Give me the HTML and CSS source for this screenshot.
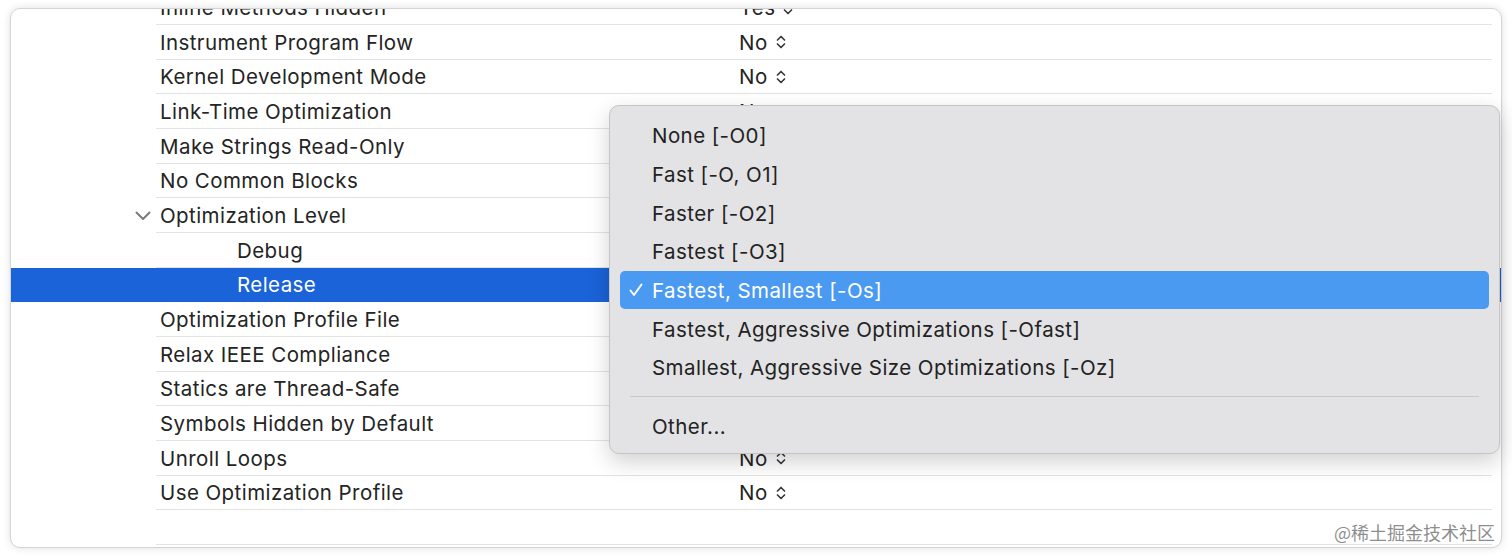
FILE: index.html
```html
<!DOCTYPE html>
<html>
<head>
<meta charset="utf-8">
<link rel="stylesheet" href="styles.css">
</head>
<body>
<div class="window">
  <div class="list">
    <div class="row"><div class="disc"></div><div class="cell"><span class="label">Inline Methods Hidden</span><span class="value">Yes <svg class="step" viewBox="0 0 10 16"><path d="M1.5 6 L5 2.5 L8.5 6 M1.5 10 L5 13.5 L8.5 10"/></svg></span></div></div>
    <div class="row"><div class="disc"></div><div class="cell"><span class="label">Instrument Program Flow</span><span class="value">No <svg class="step" viewBox="0 0 10 16"><path d="M1.5 6 L5 2.5 L8.5 6 M1.5 10 L5 13.5 L8.5 10"/></svg></span></div></div>
    <div class="row"><div class="disc"></div><div class="cell"><span class="label">Kernel Development Mode</span><span class="value">No <svg class="step" viewBox="0 0 10 16"><path d="M1.5 6 L5 2.5 L8.5 6 M1.5 10 L5 13.5 L8.5 10"/></svg></span></div></div>
    <div class="row"><div class="disc"></div><div class="cell"><span class="label">Link-Time Optimization</span><span class="value">No <svg class="step" viewBox="0 0 10 16"><path d="M1.5 6 L5 2.5 L8.5 6 M1.5 10 L5 13.5 L8.5 10"/></svg></span></div></div>
    <div class="row"><div class="disc"></div><div class="cell"><span class="label">Make Strings Read-Only</span><span class="value">Yes <svg class="step" viewBox="0 0 10 16"><path d="M1.5 6 L5 2.5 L8.5 6 M1.5 10 L5 13.5 L8.5 10"/></svg></span></div></div>
    <div class="row"><div class="disc"></div><div class="cell"><span class="label">No Common Blocks</span><span class="value">Yes <svg class="step" viewBox="0 0 10 16"><path d="M1.5 6 L5 2.5 L8.5 6 M1.5 10 L5 13.5 L8.5 10"/></svg></span></div></div>
    <div class="row"><div class="disc"><svg class="chev" viewBox="0 0 16 10"><path d="M1.5 1.5 L8 8 L14.5 1.5"/></svg></div><div class="cell"><span class="label">Optimization Level</span><span class="value">&lt;Multiple values&gt;</span></div></div>
    <div class="row"><div class="disc"></div><div class="cell"><span class="label child">Debug</span><span class="value">None [-O0]</span></div></div>
    <div class="row selected"><div class="disc"></div><div class="cell"><span class="label child">Release</span><span class="value">Fastest, Smallest [-Os]</span></div></div>
    <div class="row"><div class="disc"></div><div class="cell"><span class="label">Optimization Profile File</span><span class="value"></span></div></div>
    <div class="row"><div class="disc"></div><div class="cell"><span class="label">Relax IEEE Compliance</span><span class="value">Yes</span></div></div>
    <div class="row"><div class="disc"></div><div class="cell"><span class="label">Statics are Thread-Safe</span><span class="value">Yes</span></div></div>
    <div class="row"><div class="disc"></div><div class="cell"><span class="label">Symbols Hidden by Default</span><span class="value">No</span></div></div>
    <div class="row"><div class="disc"></div><div class="cell"><span class="label">Unroll Loops</span><span class="value">No <svg class="step" viewBox="0 0 10 16"><path d="M1.5 6 L5 2.5 L8.5 6 M1.5 10 L5 13.5 L8.5 10"/></svg></span></div></div>
    <div class="row"><div class="disc"></div><div class="cell"><span class="label">Use Optimization Profile</span><span class="value">No <svg class="step" viewBox="0 0 10 16"><path d="M1.5 6 L5 2.5 L8.5 6 M1.5 10 L5 13.5 L8.5 10"/></svg></span></div></div>
    <div class="row"><div class="disc"></div><div class="cell"><span class="label"></span></div></div>
  </div>
</div>

<div class="menu">
  <div class="item">None [-O0]</div>
  <div class="item">Fast [-O, O1]</div>
  <div class="item">Faster [-O2]</div>
  <div class="item">Fastest [-O3]</div>
  <div class="item active"><svg class="check" viewBox="0 0 14 14"><path d="M1.5 7.5 L5 12 L12.5 1.5"/></svg>Fastest, Smallest [-Os]</div>
  <div class="item">Fastest, Aggressive Optimizations [-Ofast]</div>
  <div class="item">Smallest, Aggressive Size Optimizations [-Oz]</div>
  <div class="sep"></div>
  <div class="item">Other...</div>
</div>

<div class="watermark">@稀土掘金技术社区</div>
</body>
</html>
```

FILE: styles.css
```css
html, body {
  margin: 0;
  padding: 0;
  background: #ffffff;
}
body {
  position: relative;
  width: 1512px;
  height: 559px;
  overflow: hidden;
  font-family: Inter, "Noto Sans", sans-serif;
  font-size: 20.5px;
  letter-spacing: 0.43px;
  color: #242424;
}
.window {
  margin: 8px 0 0 10px;
  width: 1492px;
  height: 540px;
  box-sizing: border-box;
  border: 1px solid #d4d4d4;
  border-radius: 10px;
  overflow: hidden;
  background: #fff;
  box-shadow: 0 0 8px rgba(0, 0, 0, 0.12);
}
.list {
  margin-top: -18.67px;
}
.row {
  display: flex;
  height: 34.67px;
  padding-left: 124px;
  padding-right: 9px;
}
.disc {
  width: 21px;
  display: flex;
  align-items: center;
}
.chev {
  width: 16px;
  height: 10px;
  fill: none;
  stroke: #7a7a7a;
  stroke-width: 2;
  stroke-linecap: round;
  stroke-linejoin: round;
}
.cell {
  flex: 1;
  display: flex;
  align-items: center;
  box-sizing: border-box;
  border-bottom: 1px solid #e3e3e3;
  padding-top: 1px;
}
.label {
  width: 583px;
  padding-left: 4px;
  box-sizing: border-box;
  white-space: nowrap;
}
.label.child {
  padding-left: 81px;
}
.value {
  display: flex;
  align-items: center;
  gap: 8px;
  white-space: nowrap;
}
.step {
  width: 10px;
  height: 16px;
  fill: none;
  stroke: #3a3a3a;
  stroke-width: 1.7;
  stroke-linecap: round;
  stroke-linejoin: round;
}
.row.selected {
  background: #1b63d8;
  color: #fff;
}
.row.selected .cell {
  border-bottom-color: transparent;
}
.menu {
  position: absolute;
  left: 609px;
  top: 105px;
  width: 891px;
  height: 349px;
  box-sizing: border-box;
  padding: 10px 10px 8px 10px;
  background: #e3e3e5;
  border: 1px solid #c4c4c6;
  border-radius: 10px;
  box-shadow: 0 8px 22px rgba(0, 0, 0, 0.18);
  color: #222;
}
.item {
  height: 38.7px;
  display: flex;
  align-items: center;
  padding-left: 32px;
  padding-top: 1px;
  box-sizing: border-box;
  border-radius: 5px;
  white-space: nowrap;
  position: relative;
}
.item.active {
  background: #4a9af2;
  color: #fff;
}
.check {
  position: absolute;
  left: 9px;
  top: 12px;
  width: 14px;
  height: 14px;
  fill: none;
  stroke: #fff;
  stroke-width: 2;
  stroke-linecap: round;
  stroke-linejoin: round;
}
.sep {
  height: 1px;
  margin: 9px 10px 10px 10px;
  background: #c8c8ca;
}
.watermark {
  position: absolute;
  left: 1334px;
  top: 519px;
  font-family: "Noto Sans CJK SC", sans-serif;
  font-size: 18px;
  color: rgba(120, 120, 120, 0.85);
  letter-spacing: 0;
}
```
